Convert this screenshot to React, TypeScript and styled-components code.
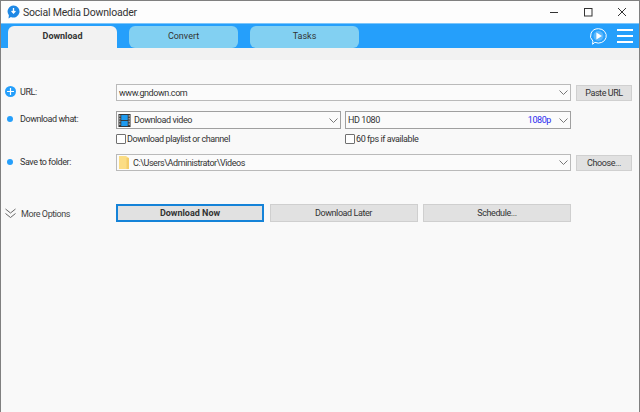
import React from "react";
import styled, { createGlobalStyle } from "styled-components";

const GlobalStyle = createGlobalStyle`
  html, body {
    margin: 0;
    padding: 0;
    background: #f9f9f9;
  }
  body {
    font-family: Roboto, "Liberation Sans", sans-serif;
    font-size: 9px;
    letter-spacing: -0.42px;
    color: #333;
  }
`;

const ChevronDown = () => (
  <ChevronIcon viewBox="0 0 9 5">
    <path d="M0.5 0.5 L4.5 4.5 L8.5 0.5" fill="none" stroke="#777" strokeWidth="1" />
  </ChevronIcon>
);

const AppLogo = () => (
  <svg width="13" height="14" viewBox="0 0 13 14">
    <path d="M6.5 0.5a6 6 0 1 1-2.6 11.4L1.5 13.4l.4-3.2A6 6 0 0 1 6.5 .5z" fill="#1e88e5" />
    <path d="M6.5 3v4.5M4.6 6l1.9 2 1.9-2" fill="none" stroke="#fff" strokeWidth="1.3" />
  </svg>
);

const VideoIcon = () => (
  <svg width="13" height="13" viewBox="0 0 13 14">
    <rect x="0" y="0" width="13" height="14" fill="#333" />
    <rect x="3" y="1" width="7" height="5.5" fill="#1e9bf0" />
    <rect x="3" y="7.5" width="7" height="5.5" fill="#1e9bf0" />
    {[1, 4, 7, 10].map((y) => (
      <React.Fragment key={y}>
        <rect x="1" y={y} width="1" height="2" fill="#ddd" />
        <rect x="11" y={y} width="1" height="2" fill="#ddd" />
      </React.Fragment>
    ))}
  </svg>
);

const FolderIcon = () => (
  <svg width="12" height="13" viewBox="0 0 12 13">
    <path d="M1 0h7l3 2v11H1z" fill="#fbdd85" />
    <path d="M8.5 2H11v11H8.5z" fill="#f3cd6b" />
  </svg>
);

const BubblePlay = () => (
  <svg width="18" height="17" viewBox="0 0 18 17">
    <path
      d="M9.5 .7a7.8 7.2 0 1 1-3.6 13.6L3.6 16.3l.3-3.2A7.8 7.2 0 0 1 9.5 .7z"
      fill="none"
      stroke="#fff"
      strokeWidth="1"
    />
    <circle cx="9.5" cy="8" r="5" fill="#fff" opacity="0.25" />
    <path d="M7.4 4.6 L13 8 L7.4 11.4z" fill="#fff" />
  </svg>
);

const DoubleChevron = () => (
  <svg width="11" height="11" viewBox="0 0 11 11">
    <path d="M.5 1 L5.5 5 L10.5 1 M.5 5.5 L5.5 9.5 L10.5 5.5" fill="none" stroke="#666" strokeWidth="1" />
  </svg>
);

const App = () => {
  return (
    <Window>
      <GlobalStyle />
      <TitleBar>
        <AppLogo />
        <Title>Social Media Downloader</Title>
        <WindowControls>
          <ControlSlot>
            <svg width="10" height="10" viewBox="0 0 10 10">
              <path d="M1 5.5h8" stroke="#333" strokeWidth="1" />
            </svg>
          </ControlSlot>
          <ControlSlot>
            <svg width="10" height="10" viewBox="0 0 10 10">
              <rect x="1.5" y="1.5" width="7.5" height="7.5" fill="none" stroke="#333" strokeWidth="1" />
            </svg>
          </ControlSlot>
          <ControlSlot>
            <svg width="10" height="10" viewBox="0 0 10 10">
              <path d="M1 1l8 8M9 1l-8 8" stroke="#333" strokeWidth="1" />
            </svg>
          </ControlSlot>
        </WindowControls>
      </TitleBar>

      <TabBar>
        <Tab $active>Download</Tab>
        <Tab>Convert</Tab>
        <Tab>Tasks</Tab>
        <TabTools>
          <BubblePlay />
          <Burger>
            <span />
            <span />
            <span />
          </Burger>
        </TabTools>
      </TabBar>
      <TabStrip />

      <Form>
        <Row $top={24}>
          <LabelCell>
            <PlusDot>
              <svg width="7" height="7" viewBox="0 0 7 7">
                <path d="M3.5 0v7M0 3.5h7" stroke="#fff" strokeWidth="1.2" />
              </svg>
            </PlusDot>
            <Label>URL:</Label>
          </LabelCell>
          <Field $width={455}>
            <FieldText>www.gndown.com</FieldText>
            <ChevronDown />
          </Field>
          <SideButton>Paste URL</SideButton>
        </Row>

        <Row $top={10}>
          <LabelCell>
            <Dot />
            <Label>Download what:</Label>
          </LabelCell>
          <Field $width={225} $height={18} $dark>
            <VideoIcon />
            <FieldText>Download video</FieldText>
            <ChevronDown />
          </Field>
          <Field $width={226} $height={18} $dark>
            <FieldText>HD 1080</FieldText>
            <Quality>1080p</Quality>
            <ChevronDown />
          </Field>
        </Row>

        <CheckRow>
          <CheckCell $width={229}>
            <CheckBox />
            <span>Download playlist or channel</span>
          </CheckCell>
          <CheckCell>
            <CheckBox />
            <span>60 fps if available</span>
          </CheckCell>
        </CheckRow>

        <Row $top={10}>
          <LabelCell>
            <Dot />
            <Label>Save to folder:</Label>
          </LabelCell>
          <Field $width={455}>
            <FolderIcon />
            <FieldText>C:\Users\Administrator\Videos</FieldText>
            <ChevronDown />
          </Field>
          <SideButton>Choose...</SideButton>
        </Row>

        <ActionRow>
          <MoreCell>
            <DoubleChevron />
            <MoreLabel>More Options</MoreLabel>
          </MoreCell>
          <ActionButton $primary>Download Now</ActionButton>
          <ActionButton>Download Later</ActionButton>
          <ActionButton>Schedule...</ActionButton>
        </ActionRow>
      </Form>
    </Window>
  );
};

export default App;

const Window = styled.div`
  box-sizing: border-box;
  width: 640px;
  height: 412px;
  background: #f9f9f9;
  border: 1px solid #808080;
  border-bottom: none;
  overflow: hidden;
`;

const TitleBar = styled.div`
  height: 22px;
  display: flex;
  align-items: center;
  padding-left: 6px;
  background: #fdfdfd;
`;

const Title = styled.span`
  margin-left: 3px;
  font-size: 10.5px;
  letter-spacing: -0.2px;
  color: #333;
`;

const WindowControls = styled.div`
  margin-left: auto;
  display: flex;
`;

const ControlSlot = styled.div`
  width: 34px;
  height: 22px;
  display: flex;
  align-items: center;
  justify-content: center;
`;

const TabBar = styled.div`
  height: 24px;
  display: flex;
  align-items: flex-end;
  gap: 12px;
  padding-left: 7px;
  background: #259ffb;
  border-top: 1px solid #7cc6fb;
`;

const Tab = styled.div<{ $active?: boolean }>`
  box-sizing: border-box;
  width: 109px;
  height: 22px;
  padding-bottom: 2px;
  display: flex;
  align-items: center;
  justify-content: center;
  border-radius: 6px 6px ${({ $active }) => ($active ? "0 0" : "6px 6px")};
  background: ${({ $active }) => ($active ? "#f2f2f2" : "#82d0f2")};
  font-size: 9px;
  font-weight: ${({ $active }) => ($active ? 700 : 400)};
  letter-spacing: 0;
  color: #333;
`;

const TabTools = styled.div`
  margin-left: auto;
  align-self: center;
  display: flex;
  align-items: center;
  gap: 10px;
  padding-right: 6px;
`;

const Burger = styled.div`
  width: 16px;
  display: flex;
  flex-direction: column;
  gap: 4px;

  span {
    display: block;
    height: 2px;
    background: #fff;
  }
`;

const TabStrip = styled.div`
  height: 12px;
  background: #f2f2f2;
`;

const Form = styled.div`
  display: flex;
  flex-direction: column;
`;

const Row = styled.div<{ $top: number }>`
  display: flex;
  align-items: center;
  gap: 4px;
  margin-top: ${({ $top }) => $top}px;
`;

const LabelCell = styled.div`
  box-sizing: border-box;
  width: 111px;
  padding: 0 0 2px 4px;
  display: flex;
  align-items: center;
  flex-shrink: 0;
`;

const MoreCell = styled(LabelCell)`
  width: 109.5px;
  padding: 1px 0 0 4px;
`;

const PlusDot = styled.span`
  width: 11px;
  height: 11px;
  border-radius: 50%;
  background: #259ffb;
  display: flex;
  align-items: center;
  justify-content: center;
`;

const Dot = styled.span`
  width: 6px;
  height: 6px;
  margin: 0 3px 0 2px;
  border-radius: 50%;
  background: #259ffb;
`;

const Label = styled.span`
  margin-left: 4px;
  color: #333;
`;

const Field = styled.div<{ $width: number; $height?: number; $dark?: boolean }>`
  box-sizing: border-box;
  width: ${({ $width }) => $width}px;
  height: ${({ $height }) => $height ?? 17}px;
  padding: 0 2px 0 1px;
  display: flex;
  align-items: center;
  gap: 2px;
  background: #fbfbfb;
  border: 1px solid ${({ $dark }) => ($dark ? "#a0a0a0" : "#bababa")};
`;

const FieldText = styled.span`
  flex: 1;
  white-space: nowrap;
  padding-left: 1px;
`;

const Quality = styled.span`
  color: #2a2af0;
  margin-right: 6px;
`;

const ChevronIcon = styled.svg`
  width: 9px;
  height: 5px;
  flex-shrink: 0;
`;

const SideButton = styled.button`
  box-sizing: border-box;
  width: 56px;
  height: 16px;
  padding: 0;
  margin-left: 1px;
  font: inherit;
  letter-spacing: inherit;
  color: #333;
  background: #e1e1e1;
  border: 1px solid #d0d0d0;
`;

const CheckRow = styled.div`
  display: flex;
  height: 11px;
  margin: 4px 0 0 115px;
`;

const CheckCell = styled.label<{ $width?: number }>`
  display: flex;
  align-items: center;
  gap: 1px;
  width: ${({ $width }) => ($width ? `${$width}px` : "auto")};
`;

const CheckBox = styled.span`
  box-sizing: border-box;
  width: 10px;
  height: 10px;
  background: #fff;
  border: 1px solid #707070;
  border-radius: 1px;
`;

const ActionRow = styled.div`
  display: flex;
  align-items: center;
  gap: 5.5px;
  margin-top: 33px;
`;

const MoreLabel = styled.span`
  margin-left: 5px;
  color: #444;
`;

const ActionButton = styled.button<{ $primary?: boolean }>`
  box-sizing: border-box;
  width: 148px;
  height: 18px;
  padding: 0;
  font: inherit;
  font-weight: ${({ $primary }) => ($primary ? 700 : 400)};
  letter-spacing: ${({ $primary }) => ($primary ? "0" : "inherit")};
  color: #333;
  background: #e1e1e1;
  border: ${({ $primary }) => ($primary ? "2px solid #1583d8" : "1px solid #cfcfcf")};
`;
